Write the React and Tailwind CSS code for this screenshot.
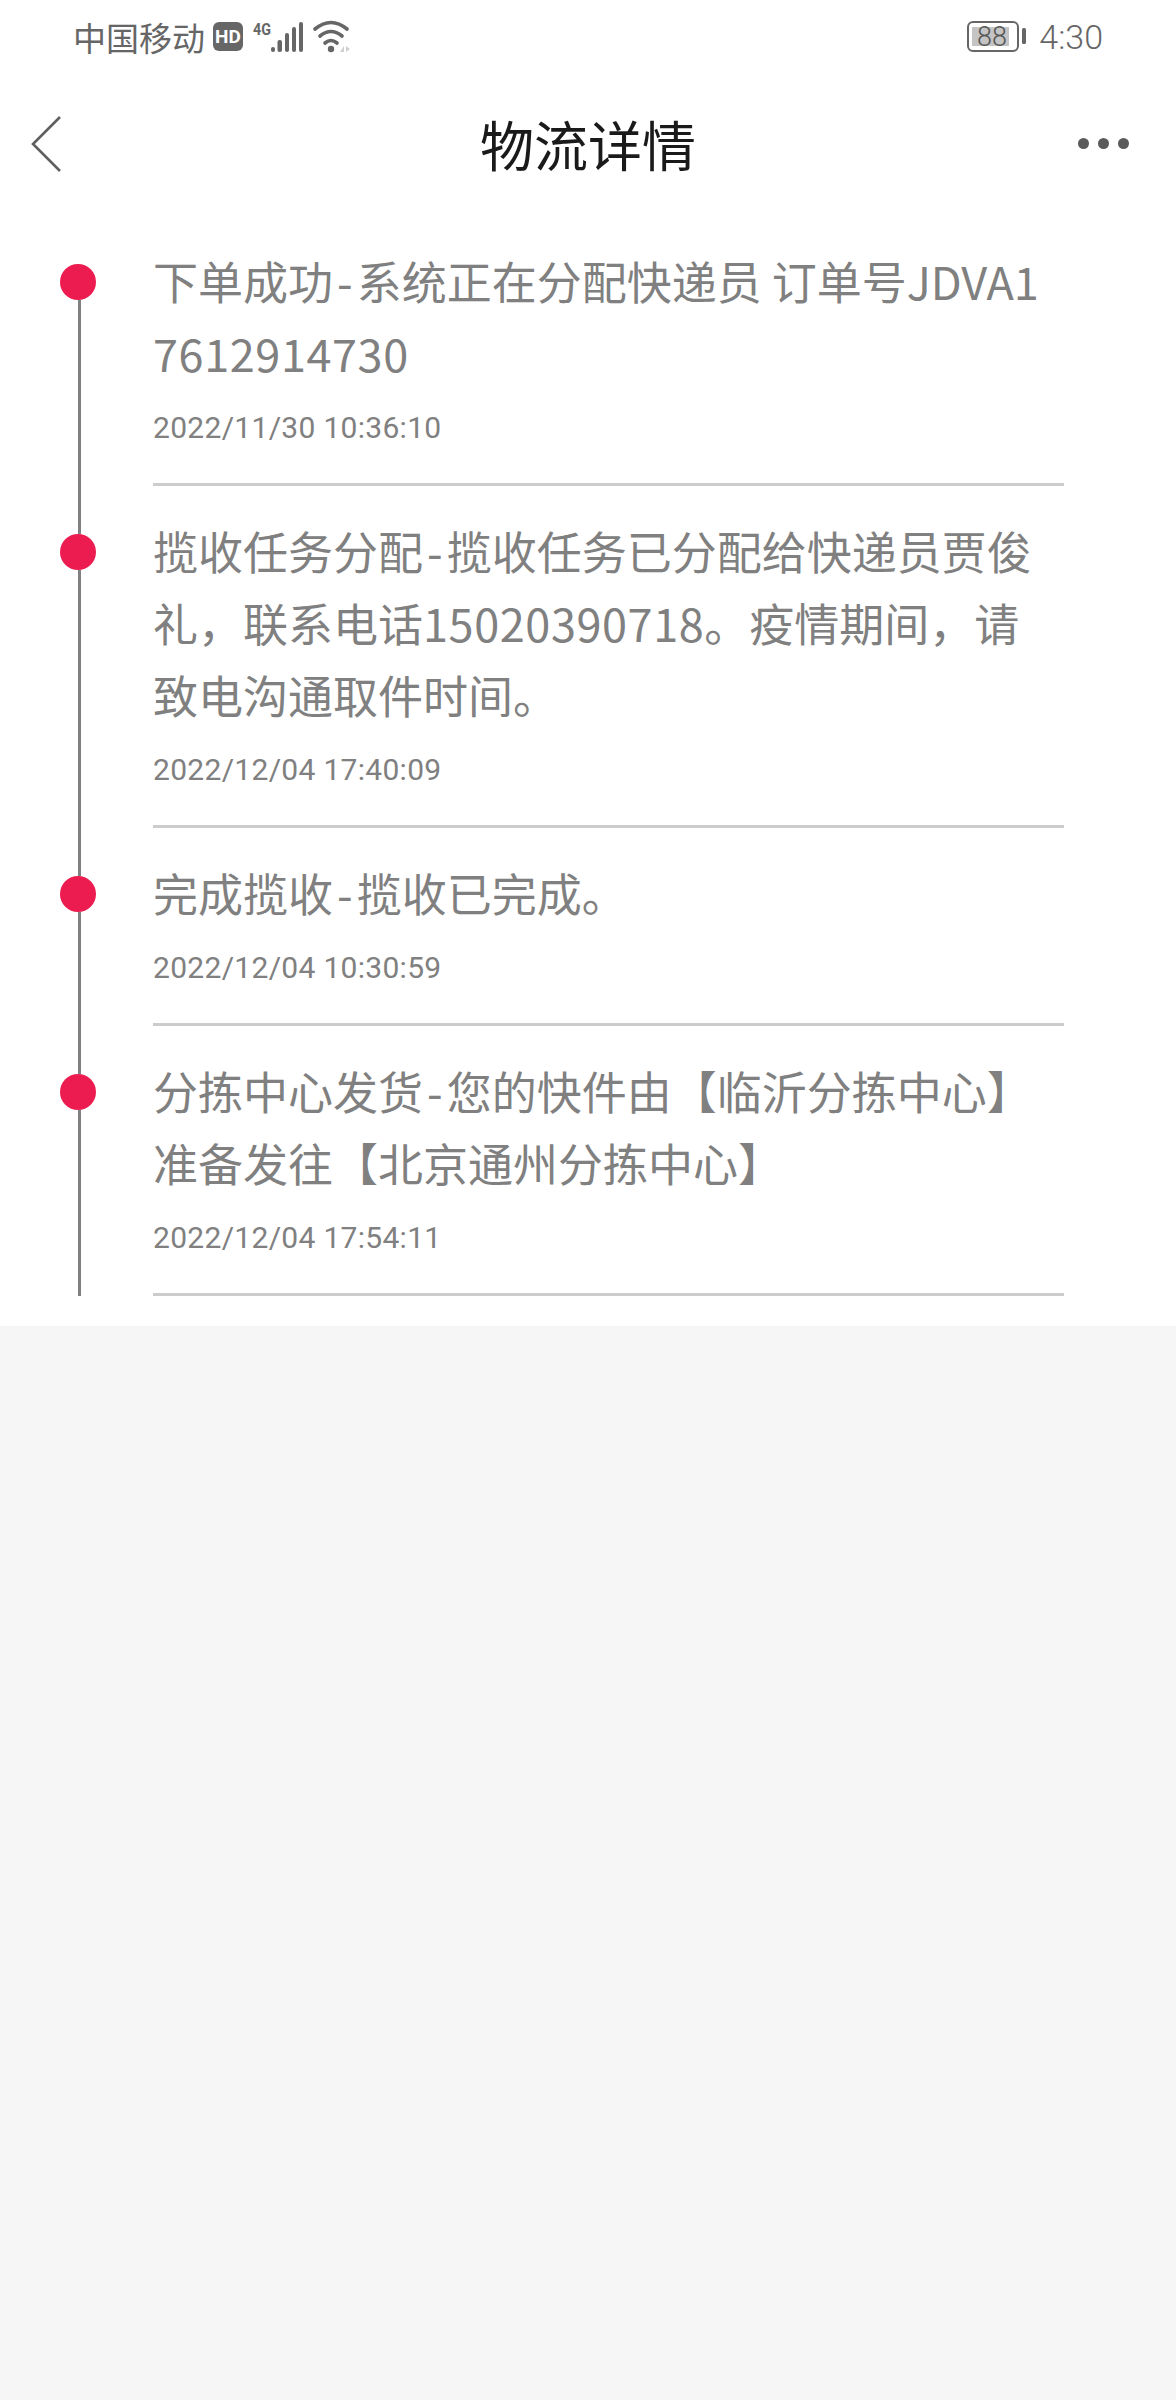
const steps = [
  {
    lines: ['下单成功-系统正在分配快递员 订单号JDVA1', '7612914730'],
    time: '2022/11/30 10:36:10',
  },
  {
    lines: ['揽收任务分配-揽收任务已分配给快递员贾俊', '礼，联系电话15020390718。疫情期间，请', '致电沟通取件时间。'],
    time: '2022/12/04 17:40:09',
  },
  {
    lines: ['完成揽收-揽收已完成。'],
    time: '2022/12/04 10:30:59',
  },
  {
    lines: ['分拣中心发货-您的快件由【临沂分拣中心】', '准备发往【北京通州分拣中心】'],
    time: '2022/12/04 17:54:11',
  },
];

const font = { fontFamily: '"Noto Sans CJK SC", "Noto Sans", sans-serif' };

function StatusBar() {
  return (
    <div className="flex h-[76px] items-center justify-between pb-[2px] pl-[73px] pr-[73px] text-[#666666]">
      <div className="flex items-center">
        <span className="text-[33px] leading-none">中国移动</span>
        <svg className="ml-[8px]" width="140" height="36" viewBox="0 0 140 36">
          <rect x="0" y="3" width="30" height="29" rx="6" fill="#666" />
          <text x="15" y="24" textAnchor="middle" fontSize="19" fontWeight="700" fill="#fff" fontFamily="Roboto">HD</text>
          <text x="40" y="16" fontSize="16" fontWeight="700" fill="#666" fontFamily="Roboto" textLength="18" lengthAdjust="spacingAndGlyphs">4G</text>
          <rect x="58" y="28" width="4" height="5" rx="2" fill="#666" />
          <rect x="64.5" y="21" width="4.5" height="12" rx="2" fill="#666" />
          <rect x="72" y="14" width="4" height="19" rx="2" fill="#666" />
          <rect x="79" y="8" width="4" height="25" rx="2" fill="#666" />
          <rect x="86" y="3" width="4" height="30" rx="2" fill="#666" />
          <g fill="none" stroke="#666" strokeWidth="3.6" strokeLinecap="round">
            <path d="M102 10 Q118 -3 134 10" />
            <path d="M107 17 Q118 8 129 17" />
            <path d="M112 24 Q118 19 124 24" />
          </g>
          <circle cx="118" cy="30" r="3.2" fill="#666" />
          <path d="M127 33 L131 27 V33 Z M133 27 V33 L137 30 Z" fill="#cfcfcf" />
        </svg>
      </div>
      <div className="flex items-center">
        <svg width="60" height="34" viewBox="0 0 60 34">
          <rect x="1" y="2" width="50" height="29" rx="5" fill="none" stroke="#666" strokeWidth="2" />
          <rect x="5" y="7" width="37" height="19" fill="#c4c4c4" />
          <rect x="55" y="8" width="4" height="16" rx="1.5" fill="#666" />
          <text x="25" y="26" textAnchor="middle" fontSize="27" fontWeight="300" fill="#555" fontFamily="Roboto">88</text>
        </svg>
        <span className="ml-[12px] text-[34px] font-light leading-none" style={{ fontFamily: 'Roboto, sans-serif' }}>4:30</span>
      </div>
    </div>
  );
}

function NavBar() {
  return (
    <div className="grid h-[140px] grid-cols-[1fr_auto_1fr] items-center px-[30px] pb-[5px]">
      <svg width="32" height="56" viewBox="0 0 32 56" fill="none" stroke="#5f5f5f" strokeWidth="2.6">
        <path d="M30 1 L3 28 L30 55" />
      </svg>
      <h1 className="text-[54px] font-normal leading-none text-[#1a1a1a]">物流详情</h1>
      <div className="mr-[17px] flex items-center justify-end gap-[9px]">
        <span className="h-[11px] w-[11px] rounded-full bg-[#5a5a5a]" />
        <span className="h-[11px] w-[11px] rounded-full bg-[#5a5a5a]" />
        <span className="h-[11px] w-[11px] rounded-full bg-[#5a5a5a]" />
      </div>
    </div>
  );
}

// hyphens and digit runs are wider in the reference font than in Noto
function StepLine({ text }) {
  const parts = text.split(/(-|\d{2,})/);
  return (
    <div className="whitespace-nowrap">
      {parts.map((part, index) => {
        if (part === '-') return <span key={index} className="px-[4px]">-</span>;
        if (/^\d{2,}$/.test(part)) return <span key={index} className="tracking-[0.6px]">{part}</span>;
        return part;
      })}
    </div>
  );
}

function Step({ step, first }) {
  return (
    <div className="flex">
      <div className="flex w-[153px] shrink-0 flex-col">
        <div className={`ml-[78px] h-[48px] w-[3px] ${first ? '' : 'bg-[#808080]'}`} />
        <div className="ml-[60px] h-[36px] w-[36px] rounded-full bg-[#ec1c50]" />
        <div className="ml-[78px] w-[3px] flex-1 bg-[#808080]" />
      </div>
      <div className="w-[911px] border-b-[3px] border-[#cccccc] pb-[33px] pt-[29px]">
        <div className="text-[45px] leading-[72px] text-[#808080]">
          {step.lines.map((line) => (
            <StepLine key={line} text={line} />
          ))}
        </div>
        <div
          className="mt-[17px] text-[30px] leading-[44px] tracking-[0.3px] text-[#808080]"
          style={{ fontFamily: 'Roboto, sans-serif' }}
        >
          {step.time}
        </div>
      </div>
    </div>
  );
}

export default function App() {
  return (
    <div className="min-h-[2400px] bg-[#f6f6f6]" style={font}>
      <div className="h-[1326px] bg-white">
        <StatusBar />
        <NavBar />
        {steps.map((step, index) => (
          <Step key={step.time} step={step} first={index === 0} />
        ))}
      </div>
    </div>
  );
}
